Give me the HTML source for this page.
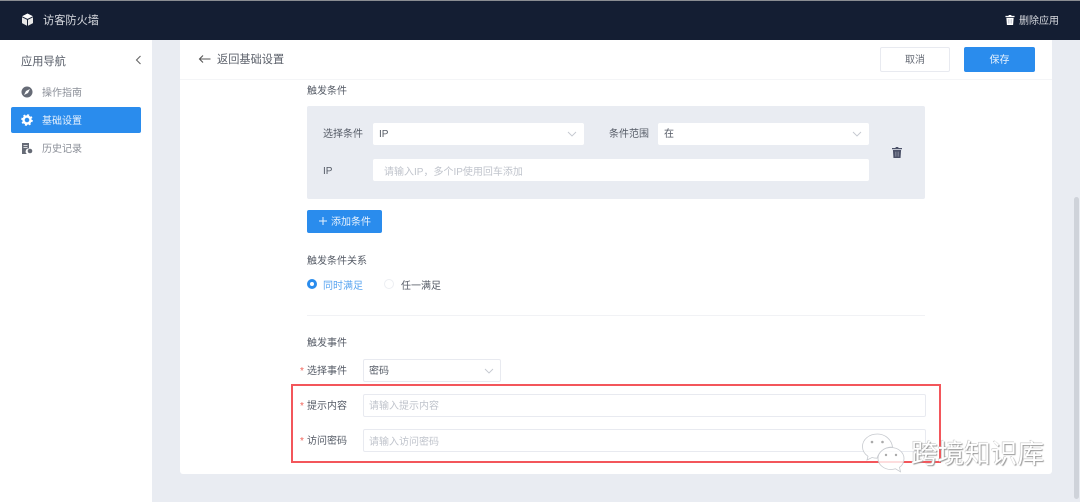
<!DOCTYPE html>
<html lang="zh"><head><meta charset="utf-8"><style>
html,body{margin:0;padding:0}
body{width:1080px;height:502px;position:relative;overflow:hidden;background:#e9ecf2;font-family:"Liberation Sans","Noto Sans CJK SC",sans-serif;color:#555b66;font-size:10px;filter:blur(.25px)}
.a{position:absolute;box-sizing:border-box;white-space:nowrap}
.t{line-height:14px;height:14px}
.box{background:#fff;border-radius:2px}
.ln{border:1px solid #e8eaf0}
.ph{color:#c0c4cc}
.star{color:#f0645a}
svg{position:absolute}
</style></head><body>
<div class="a" style="left:0;top:0;width:1080px;height:40px;background:#141e33;border-top:1px solid #8a8d92"></div>
<svg style="left:21px;top:13px" width="13" height="14" viewBox="0 0 13 14"><path d="M6.500 0.500 12 3.200 6.500 5.900 1 3.200Z" fill="#fff"/><path d="M1 4.300 6 6.800V12.800L1 10.100ZM12 4.300 7 6.800V12.800L12 10.100Z" fill="#e8e8e8"/></svg>
<div class="a t" style="left:43px;top:14px;font-size:11.2px;color:#d9dbe0">访客防火墙</div>
<svg style="left:1005px;top:15px" width="10" height="10" viewBox="0 0 10 11"><path d="M3.500 1V0h3v1H10v1.400H0V1ZM1 3.200h8L8.400 11H1.600Z" fill="#fff"/><path d="M3.500 4.500v5M5 4.500v5M6.500 4.500v5" stroke="#b9bdc8" stroke-width=".7"/></svg>
<div class="a t" style="left:1019px;top:15px;font-size:10px;color:#d9dbe0">删除应用</div>

<div class="a" style="left:0;top:40px;width:152px;height:462px;background:#fff"></div>
<div class="a t" style="left:21px;top:55px;font-size:11.2px;color:#555b66">应用导航</div>
<svg style="left:135px;top:55px" width="7" height="10" viewBox="0 0 7 10"><path d="M5.500 1 1.500 5l4 4" fill="none" stroke="#666" stroke-width="1.100"/></svg>
<svg style="left:21px;top:86px" width="12" height="12" viewBox="0 0 12 12"><circle cx="6" cy="6" r="5.500" fill="#666b76"/><path d="M9 3 7 7 3 9 5 5Z" fill="#fff"/></svg>
<div class="a t" style="left:42px;top:87px;color:#8b8f98">操作指南</div>
<div class="a" style="left:11px;top:107px;width:130px;height:26px;background:#2a8ced;border-radius:2px"></div>
<svg style="left:21px;top:114px" width="12" height="12" viewBox="0 0 12 12"><circle cx="6" cy="6" r="3.500" fill="none" stroke="#fff" stroke-width="2.400"/><circle cx="6" cy="6" r="5" fill="none" stroke="#fff" stroke-width="1.600" stroke-dasharray="2 1.930"/></svg>
<div class="a t" style="left:42px;top:115px;color:#e8f2fd">基础设置</div>
<svg style="left:22px;top:143px" width="11" height="11" viewBox="0 0 11 11"><path d="M0 0H7V5.500A3 3 0 0 0 5 11H0Z" fill="#666b76"/><circle cx="8" cy="8" r="2.300" fill="#666b76"/><path d="M1.500 2.500h4M1.500 4.500h4" stroke="#fff" stroke-width=".7"/></svg>
<div class="a t" style="left:42px;top:143px;color:#8b8f98">历史记录</div>

<div class="a" style="left:180px;top:40px;width:872px;height:434px;background:#fff;border-radius:0 0 3px 3px"></div>
<div class="a" style="left:180px;top:79px;width:872px;height:1px;background:#f4f5f7"></div>
<svg style="left:198px;top:54px" width="13" height="10" viewBox="0 0 13 10"><path d="M12.500 5H1.500M5 1.500 1.500 5 5 8.500" fill="none" stroke="#555" stroke-width="1.100"/></svg>
<div class="a t" style="left:217px;top:53px;font-size:11.2px;color:#5c616b">返回基础设置</div>
<div class="a" style="left:880px;top:47px;width:70px;height:25px;background:#fff;border:1px solid #e8eaf0;border-radius:2px;text-align:center;line-height:25px;color:#666b75">取消</div>
<div class="a" style="left:964px;top:47px;width:71px;height:25px;background:#2a8ced;border-radius:2px;text-align:center;line-height:28px;color:#e8f2fd">保存</div>

<div class="a t" style="left:307px;top:85px">触发条件</div>
<div class="a" style="left:307px;top:106px;width:618px;height:93px;background:#e9ecf2;border-radius:2px"></div>
<div class="a t" style="left:323px;top:128px">选择条件</div>
<div class="a box t" style="left:373px;top:123px;width:211px;height:22px;line-height:24px;padding-left:6px">IP</div>
<svg style="left:567px;top:131px" width="10" height="6" viewBox="0 0 10 6"><path d="M1 1l4 4 4-4" fill="none" stroke="#c4c8d0" stroke-width=".9"/></svg>
<div class="a t" style="left:609px;top:128px">条件范围</div>
<div class="a box t" style="left:658px;top:123px;width:211px;height:22px;line-height:24px;padding-left:6px">在</div>
<svg style="left:852px;top:131px" width="10" height="6" viewBox="0 0 10 6"><path d="M1 1l4 4 4-4" fill="none" stroke="#c4c8d0" stroke-width=".9"/></svg>
<div class="a t" style="left:323px;top:165px">IP</div>
<div class="a box t ph" style="left:373px;top:159px;width:496px;height:22px;line-height:27px;padding-left:11px">请输入IP，多个IP使用回车添加</div>
<svg style="left:892px;top:147px" width="10" height="11" viewBox="0 0 11 12"><path d="M4 1V0h3v1h4v1.400H0V1ZM1 3.200h9L9.400 12H1.600Z" fill="#4b5168"/><path d="M3.800 5v5.500M5.500 5v5.500M7.200 5v5.500" stroke="#9a9eae" stroke-width=".6"/></svg>

<div class="a" style="left:307px;top:210px;width:75px;height:23px;background:#2a8ced;border-radius:2px"></div>
<svg style="left:318px;top:216px" width="10" height="10" viewBox="0 0 10 10"><path d="M5 1v8M1 5h8" stroke="#e8f2fd" stroke-width="1"/></svg>
<div class="a t" style="left:331px;top:216px;color:#e8f2fd">添加条件</div>

<div class="a t" style="left:307px;top:255px">触发条件关系</div>
<div class="a" style="left:307px;top:279px;width:10px;height:10px;border-radius:50%;background:#2a8ced"></div>
<div class="a" style="left:310px;top:282px;width:4px;height:4px;border-radius:50%;background:#fff"></div>
<div class="a t" style="left:323px;top:280px;color:#5aa5f0">同时满足</div>
<div class="a" style="left:384px;top:279px;width:10px;height:10px;border-radius:50%;background:#fff;border:1px solid #eceef2"></div>
<div class="a t" style="left:401px;top:280px">任一满足</div>
<div class="a" style="left:307px;top:315px;width:618px;height:1px;background:#f1f2f5"></div>

<div class="a t" style="left:307px;top:337px">触发事件</div>
<div class="a t star" style="left:300px;top:365px">*</div>
<div class="a t" style="left:307px;top:365px">选择事件</div>
<div class="a box ln t" style="left:363px;top:359px;width:138px;height:23px;line-height:24px;padding-left:5px">密码</div>
<svg style="left:484px;top:368px" width="10" height="6" viewBox="0 0 10 6"><path d="M1 1l4 4 4-4" fill="none" stroke="#c4c8d0" stroke-width=".9"/></svg>
<div class="a t star" style="left:300px;top:400px">*</div>
<div class="a t" style="left:307px;top:400px">提示内容</div>
<div class="a box ln t ph" style="left:363px;top:394px;width:563px;height:23px;line-height:24px;padding-left:5px">请输入提示内容</div>
<div class="a t star" style="left:300px;top:435px">*</div>
<div class="a t" style="left:307px;top:435px">访问密码</div>
<div class="a box ln t ph" style="left:363px;top:429px;width:563px;height:23px;line-height:25px;padding-left:5px">请输入访问密码</div>

<div class="a" style="left:291px;top:384px;width:650px;height:79px;border:2px solid #f3565b"></div>

<div class="a" style="left:1074px;top:197px;width:5px;height:302px;background:#cfd3da;border-radius:3px"></div>

<svg style="left:861px;top:433px" width="46" height="40" viewBox="0 0 46 40"><path d="M16.500 1C8 1 1.500 6.500 1.500 13.500c0 4 2 7.500 5.500 9.800L6 27l5-2.500c1.500.4 3 .6 5 .7C18 19 23 14 31.500 14 30.500 6.500 24 1 16.500 1Z" fill="#fff" fill-opacity=".75" stroke="#c6c9ce" stroke-width=".8"/><path d="M30 14.500c-7.200 0-13 5-13 11s5.800 11 13 11c1.700 0 3.300-.3 4.500-.7l5 3-1-4.500c3-2 4.500-5 4.500-8.800 0-6-5.800-11-13-11Z" fill="#fff" fill-opacity=".8" stroke="#c6c9ce" stroke-width=".8"/><circle cx="11" cy="9" r="1.300" fill="#aaa"/><circle cx="21.500" cy="9" r="1.300" fill="#aaa"/><circle cx="25" cy="22" r="1.200" fill="#aaa"/><circle cx="35" cy="22" r="1.200" fill="#aaa"/></svg>
<div class="a" style="left:911px;top:438px;font-size:26.600px;line-height:32px;color:#fff;text-shadow:1px 1px 1px #999,-.5px -.5px .5px #bbb">跨境知识库</div>
</body></html>
